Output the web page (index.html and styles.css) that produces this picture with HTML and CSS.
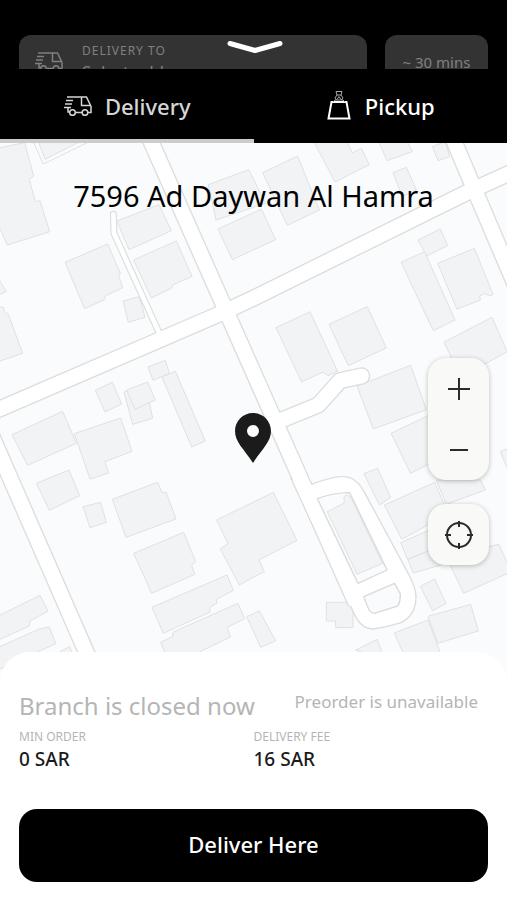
FILE: index.html
```html
<!DOCTYPE html>
<html lang="en">
<head>
<meta charset="utf-8">
<meta name="viewport" content="width=device-width, initial-scale=1">
<title>Choose delivery location</title>
<link rel="stylesheet" href="styles.css">
</head>
<body>
<svg class="defs" aria-hidden="true">
  <symbol id="truck" viewBox="0 0 28 20">
    <path d="M3 1H22.500L27 10.500V16.500H24M17.500 1V9.500H26.500M2 4.500H9M1 8H8M0 11.500H7M4 11.500V16H5.500M11.500 16.500H18"/>
    <circle cx="8.500" cy="16.500" r="2.800"/>
    <circle cx="21" cy="16.500" r="2.800"/>
  </symbol>
</svg>
<div class="screen">
  <header class="peek">
    <div class="peek-card peek-address">
      <svg class="truck"><use href="#truck"/></svg>
      <div>
        <div class="peek-label">DELIVERY TO</div>
        <div class="peek-value">Select address</div>
      </div>
    </div>
    <div class="peek-card peek-time">~ 30 mins</div>
    <button class="collapse" aria-label="Close">
      <svg viewBox="0 0 56 14"><path d="M3 3.500L28 10.500L53 3.500"/></svg>
    </button>
  </header>

  <nav class="tabs">
    <button class="tab tab-active">
      <svg class="truck"><use href="#truck"/></svg>
      Delivery
    </button>
    <button class="tab">
      <svg class="bag" viewBox="0 0 24 30">
        <path class="bag-body" d="M4.500 11H19.500L22.500 27.500H1.500Z"/>
        <path class="bag-top" d="M6 11L8 9H16L18 11M9 0.500H15L14 4H10ZM10 4L8 7L9.500 9M14 4L16 7L14.500 9M10 8.500L12 5.500L14 8.500"/>
      </svg>
      Pickup
    </button>
  </nav>

  <main class="map">
    <svg class="map-art" viewBox="0 429 1521 1640" preserveAspectRatio="xMidYMin slice" aria-hidden="true">
      <defs>
        <g id="streets">
          <path d="M443 402L910 1455L1068 1810"/>
          <path d="M-20 1235L670 937L759 895L1400 578L1540 514"/>
          <path d="M1353 402L1430 584L1550 865"/>
          <path d="M-28 1300L280 2005"/>
          <path class="cul" d="M800 1278L955 1215L1020 1142L1085 1128"/>
        </g>
        <path id="lane" d="M340 643L342 700L478 1000"/>
        <path id="loop" d="M877 1440L1064 1840Q1085 1885 1120 1885Q1160 1880 1200 1867Q1246 1845 1246 1790Q1246 1765 1225 1725L1090 1475Q1065 1432 1030 1432Q1000 1430 935 1455Z"/>
      </defs>

      <g class="buildings">
        <g transform="translate(0 420)">
          <path d="M-5 24L74 8L101 108L88 118L106 185L120 182L149 275L22 315L-5 255Z"/>
          <path d="M115 5L135 58L240 5Z"/>
          <path class="outline" d="M100 5L130 72L268 5"/>
          <path d="M-5 415L19 455L-5 464ZM-5 500L10 502L14 515L25 523L68 640L-5 665Z"/>
          <path d="M195 367L323 312L361 400L356 408L368 443L317 467L313 479L254 506Z"/>
          <path d="M351 243L477 194L514 272L387 329Z"/>
          <path d="M401 360L529 303L576 409L520 434L514 445L454 474Z"/>
          <path d="M369 483L418 470L435 532L385 547Z"/>
          <path d="M625 134L746 89L797 190L648 240Z"/>
          <path d="M654 267L784 207L827 299L697 359Z"/>
        </g>
        <g transform="translate(759 420)">
          <path d="M29 98L134 48L199 210L103 256Z"/>
          <path d="M180 0L246 126L349 74L325 25L298 39L280 0Z"/>
          <path d="M375 0L402 62L478 35L460 0Z"/>
          <path d="M420 98L460 82L490 150L448 170Z"/>
          <path d="M538 20L555 62L590 50L577 5Z"/>
          <path d="M495 300L562 267L584 317L521 348Z"/>
          <path d="M444 367L515 335L606 540L541 572Z"/>
          <path d="M554 370L664 325L720 463L709 468L695 460L680 468L682 480L612 508Z"/>
        </g>
        <g transform="translate(0 930)">
          <path d="M286 241L337 217L365 282L315 306Z"/>
          <path d="M372 246L438 230L458 325L398 343Z"/>
          <path d="M380 240L443 216L466 270L405 298Z"/>
          <path d="M444 171L496 151L508 190L459 211Z"/>
          <path d="M486 201L526 184L616 393L575 411Z"/>
          <path d="M36 374L188 304L229 400L83 466Z"/>
          <path d="M223 371L362 324L396 424L315 455L326 489L270 507Z"/>
          <path d="M109 520L207 480L239 557L148 601Z"/>
        </g>
        <g transform="translate(759 930)">
          <path d="M69 53L171 5L254 184L225 197L210 186L146 216Z"/>
          <path d="M228 43L343 -10L400 114L286 167Z"/>
          <path d="M573 96L717 22L762 125L700 160L610 175Z"/>
          <path d="M312 228L473 166L520 299L361 357Z"/>
          <path d="M414 370L540 310L590 430L473 490Z"/>
          <path d="M742 425L790 405V500L765 480Z"/>
          <path d="M333 491L374 475L413 562L379 585Z"/>
        </g>
        <g transform="translate(0 1440)">
          <path d="M249 80L302 67L319 127L270 143Z"/>
          <path d="M337 58L473 7L487 39L498 36L528 117L378 172Z"/>
          <path d="M401 220L551 157L587 245L575 256L584 283L455 340Z"/>
          <path d="M650 120L820 37L891 181L777 240L793 275L759 292L718 315L661 207L684 191Z"/>
          <path d="M456 382L681 285L700 331L650 358V370L630 381V396L490 460Z"/>
          <path d="M482 487L517 470L520 456L714 370L734 416L682 442L691 471L590 520H495Z"/>
          <path d="M740 410L778 393L827 482L782 502Z"/>
          <path d="M-5 408L120 346L144 393L89 424L88 438L-5 480Z"/>
          <path d="M-5 502L120 446L148 441L167 491L-5 570Z"/>
          <path d="M180 515L208 500L225 535Z"/>
        </g>
        <g transform="translate(759 1440)">
          <path d="M394 75L545 7L585 100L480 160L446 177Z"/>
          <path d="M550 0L580 73L697 30L683 0Z"/>
          <path d="M443 188L540 145L570 195L464 238Z"/>
          <path d="M464 238L560 200L580 250L481 279Z"/>
          <path d="M580 230L737 193L775 275L632 340Z"/>
          <path d="M502 319L545 297L579 371L539 392Z"/>
          <path d="M525 409L653 373L676 453L554 490Z"/>
          <path d="M424 459L525 420L570 540H460Z"/>
          <path d="M308 510L372 478L395 540Z"/>
          <path d="M220 367H283L300 380V443H248V423H220Z"/>
        </g>
      </g>

      <g class="casing">
        <use href="#streets"/><use href="#lane" class="lane"/><use href="#loop" class="loop"/>
      </g>
      <g class="surface">
        <use href="#streets"/><use href="#lane" class="lane"/><use href="#loop" class="loop"/>
      </g>
      <g class="islands" transform="translate(759 1440)">
        <path d="M193 56Q240 38 290 38L402 270L315 310Z"/>
        <path d="M332 350L425 310L442 342Q443 362 435 378L365 400Q353 398 348 390Z"/>
        <path class="block" d="M223 95L274 69L273 52L280 45L292 50L389 250L312 283Z"/>
      </g>
    </svg>

    <h1 class="place">7596 Ad Daywan Al Hamra</h1>
    <svg class="pin" viewBox="0 0 36 50" aria-hidden="true"><path fill-rule="evenodd" d="M18 0C8 0 0 8 0 18C0 29 9 36 18 50C27 36 36 29 36 18C36 8 28 0 18 0ZM18 12A6 6 0 1 1 18 24A6 6 0 1 1 18 12Z"/></svg>

    <div class="controls">
      <div class="zoom">
        <button aria-label="Zoom in"><svg viewBox="0 0 24 24"><path d="M12 1V23M1 12H23"/></svg></button>
        <button aria-label="Zoom out"><svg viewBox="0 0 24 24"><path d="M3 12H21"/></svg></button>
      </div>
      <button class="locate" aria-label="My location">
        <svg viewBox="0 0 30 30"><circle cx="15" cy="15" r="12"/><path d="M15 1V7M15 23V29M1 15H7M23 15H29"/></svg>
      </button>
    </div>
  </main>

  <section class="sheet">
    <div class="status">
      <h2>Branch is closed now</h2>
      <p>Preorder is unavailable</p>
    </div>
    <dl class="facts">
      <div><dt>MIN ORDER</dt><dd>0 SAR</dd></div>
      <div><dt>DELIVERY FEE</dt><dd>16 SAR</dd></div>
    </dl>
    <button class="submit">Deliver Here</button>
  </section>
</div>
</body>
</html>
```
FILE: styles.css
```css
* { box-sizing: border-box; }

body {
  margin: 0;
  background: #fff;
  color: #1b1b1b;
  font-family: "Noto Sans", sans-serif;
}

h1, h2, p, dl, dd { margin: 0; font-weight: 400; }

button {
  border: 0;
  padding: 0;
  background: none;
  color: inherit;
  font: inherit;
}

svg { display: block; fill: none; }

.defs { position: absolute; width: 0; height: 0; }

.screen {
  display: flex;
  flex-direction: column;
  min-height: 100vh;
}

/* Dimmed page header behind the open panel */
.peek {
  position: relative;
  display: flex;
  gap: 18px;
  height: 69px;
  padding: 35px 19px 0;
  overflow: hidden;
  background: #000;
  color: #808080;
}

.peek-card {
  height: 60px;
  border-radius: 12px;
  background: #333;
}

.peek-address {
  display: flex;
  flex: 1;
  gap: 19px;
  padding: 7px 16px;
}

.peek-address .truck { margin-top: 10px; }

.peek-label {
  font-size: 12px;
  line-height: 18px;
  letter-spacing: 1px;
}

.peek-value {
  font-size: 17px;
  line-height: 24px;
}

.peek-time {
  width: 103px;
  padding-top: 15px;
  font-size: 15px;
  line-height: 24px;
  text-align: center;
}

.collapse {
  position: absolute;
  top: 40px;
  left: 50%;
  width: 56px;
  margin-left: -27px;
}

.collapse path {
  stroke: #fff;
  stroke-width: 5;
  stroke-linecap: round;
  stroke-linejoin: round;
}

.truck {
  width: 28px;
  height: 20px;
  flex: none;
  stroke: currentColor;
  stroke-width: 1.5;
}

.tabs { display: flex; background: #000; }

.tab {
  display: flex;
  flex: 1;
  align-items: center;
  justify-content: center;
  gap: 13px;
  height: 74px;
  padding: 4px 0 0 1px;
  border-bottom: 4px solid #000;
  color: #fff;
  font-size: 22px;
  font-weight: 500;
  line-height: 30px;
}

.tab-active { border-color: #ccc; color: #d6d6d6; }

.bag {
  width: 24px;
  height: 30px;
  margin-right: 1px;
  stroke: #fff;
}

.bag-body { stroke-width: 2; }
.bag-top { stroke: #aaa; stroke-width: 1; }

.map {
  position: relative;
  display: flex;
  flex: 1;
  flex-direction: column;
  min-height: 543px;
  background: #f9fbfc;
}

.map-art { position: absolute; width: 100%; height: 100%; }

.buildings { fill: #f1f3f4; stroke: #e0e1e2; stroke-width: 3; }
.outline { fill: none; }

.casing { stroke: #dcdddd; stroke-width: 52; }
.surface { stroke: #fff; stroke-width: 44; }
.cul { stroke-linecap: round; stroke-linejoin: round; }
.lane { stroke-linecap: round; }
.casing .lane { stroke-width: 21; }
.surface .lane { stroke-width: 14; }
.casing .loop { stroke-width: 8; }
.surface .loop { fill: #fff; stroke-width: 0; }

.islands { fill: #f9fbfc; stroke: #d9dadb; stroke-width: 4; }
.block { fill: #f1f3f4; stroke: #e0e1e2; stroke-width: 3; }

.place {
  position: relative;
  padding-top: 32px;
  color: #000;
  font-size: 29px;
  line-height: 42px;
  text-align: center;
}

.pin {
  position: absolute;
  top: 270px;
  left: 50%;
  width: 36px;
  height: 50px;
  margin-left: -19px;
  fill: #1b1b1b;
}

.controls {
  position: absolute;
  top: 215px;
  right: 18px;
  display: grid;
  gap: 24px;
  width: 61px;
}

.zoom, .locate {
  border-radius: 18px;
  background: #f9f9f7;
  box-shadow: 0 1px 5px rgb(0 0 0 / 25%);
}

.zoom button, .locate {
  display: grid;
  place-items: center;
  width: 100%;
  height: 61px;
}

.controls svg { width: 24px; stroke: #2b2b2b; stroke-width: 2; }
.controls .locate svg { width: 30px; }

.sheet {
  position: relative;
  margin-top: -34px;
  padding: 36px 19px 18px;
  border-radius: 30px 30px 0 0;
  background: #fff;
}

.status {
  display: flex;
  justify-content: space-between;
  padding-right: 10px;
  color: #b5b5b5;
}

.status h2 { font-size: 24px; line-height: 36px; }
.status p { font-size: 17px; line-height: 28px; }

.facts { display: grid; grid-template-columns: 1fr 1fr; padding-top: 4px; }

.facts dt { color: #b5b5b5; font-size: 12px; line-height: 18px; }
.facts dd { font-size: 19px; font-weight: 500; line-height: 26px; }

.submit {
  width: 100%;
  height: 73px;
  margin-top: 37px;
  padding-bottom: 4px;
  border-radius: 18px;
  background: #000;
  color: #fff;
  font-size: 22px;
  font-weight: 500;
}
```
